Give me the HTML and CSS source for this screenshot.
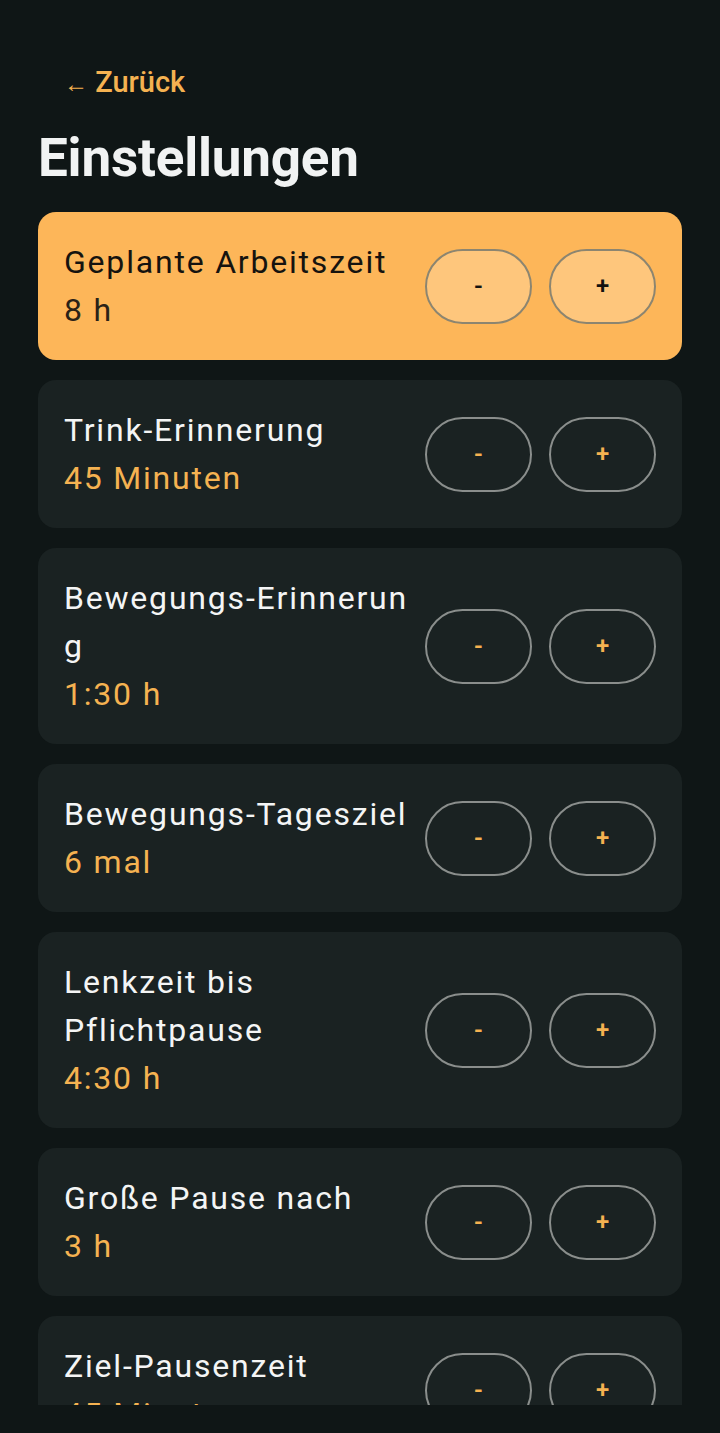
FILE: index.html
```html
<!DOCTYPE html>
<html lang="de">
<head>
<meta charset="utf-8">
<title>Einstellungen</title>
<link rel="stylesheet" href="styles.css">
</head>
<body>
<div class="screen">
  <div class="back"><span class="arrow">←</span> Zurück</div>
  <h1 class="title">Einstellungen</h1>
  <div class="list">
    <div class="card active">
      <div class="info"><div class="label">Geplante Arbeitszeit</div><div class="value">8 h</div></div>
      <div class="btns"><button class="btn">-</button><button class="btn">+</button></div>
    </div>
    <div class="card">
      <div class="info"><div class="label">Trink-Erinnerung</div><div class="value">45 Minuten</div></div>
      <div class="btns"><button class="btn">-</button><button class="btn">+</button></div>
    </div>
    <div class="card">
      <div class="info"><div class="label break-all">Bewegungs-Erinnerung</div><div class="value">1:30 h</div></div>
      <div class="btns"><button class="btn">-</button><button class="btn">+</button></div>
    </div>
    <div class="card">
      <div class="info"><div class="label">Bewegungs-Tagesziel</div><div class="value">6 mal</div></div>
      <div class="btns"><button class="btn">-</button><button class="btn">+</button></div>
    </div>
    <div class="card">
      <div class="info"><div class="label">Lenkzeit bis Pflichtpause</div><div class="value">4:30 h</div></div>
      <div class="btns"><button class="btn">-</button><button class="btn">+</button></div>
    </div>
    <div class="card">
      <div class="info"><div class="label">Große Pause nach</div><div class="value">3 h</div></div>
      <div class="btns"><button class="btn">-</button><button class="btn">+</button></div>
    </div>
    <div class="card">
      <div class="info"><div class="label">Ziel-Pausenzeit</div><div class="value">45 Minuten</div></div>
      <div class="btns"><button class="btn">-</button><button class="btn">+</button></div>
    </div>
  </div>
</div>
</body>
</html>
```
FILE: styles.css
```css
* { box-sizing: border-box; }
html, body {
  margin: 0;
  padding: 0;
  background: #0f1616;
}
body {
  font-family: Roboto, "Noto Sans", sans-serif;
  color: #f2f2f2;
}
.screen {
  height: 1405px;
  overflow: hidden;
  padding: 62px 38px 0 38px;
}
.back {
  margin-left: 26px;
  font-size: 29px;
  font-weight: 500;
  color: #f5b251;
  line-height: 40px;
}
.back .arrow {
  font-size: 24px;
  font-weight: 400;
}
.title {
  margin: 22px 0 22px 0;
  font-size: 53px;
  font-weight: 700;
  line-height: 64px;
  color: #f1f3f3;
  letter-spacing: -0.2px;
}
.list {
  display: flex;
  flex-direction: column;
  gap: 20px;
}
.card {
  display: flex;
  align-items: center;
  gap: 14px;
  padding: 26px;
  border-radius: 18px;
  background: #1a2222;
}
.card.active {
  background: #fdb659;
}
.info {
  flex: 1;
  min-width: 0;
  overflow-wrap: anywhere;
}
.label, .value {
  font-size: 32px;
  line-height: 48px;
  letter-spacing: 1.8px;
}
.label.break-all {
  word-break: break-all;
}
.label { color: #f4f5f5; }
.value { color: #f5b251; }
.card.active .label { color: #15130f; }
.card.active .value { color: #2a2217; }
.btns {
  display: flex;
  gap: 17px;
  flex: none;
}
.btn {
  width: 107px;
  height: 75px;
  border-radius: 38px;
  border: 2px solid #8a8e8c;
  background: transparent;
  color: #f5b251;
  font-family: Roboto, sans-serif;
  font-size: 24px;
  font-weight: 600;
  padding: 0;
}
.card.active .btn {
  background: #fec67c;
  border-color: #8c8570;
  color: #141210;
}
```
